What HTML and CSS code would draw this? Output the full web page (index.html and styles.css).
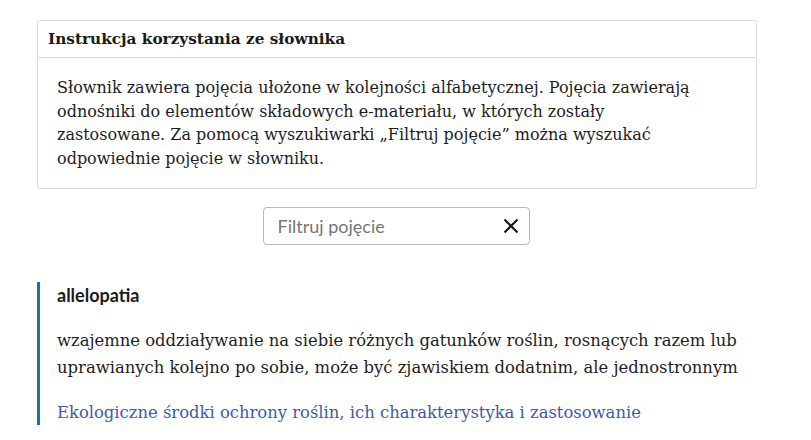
FILE: index.html
```html
<!DOCTYPE html>
<html lang="pl">
<head>
<meta charset="utf-8">
<title>Słownik</title>
<link rel="stylesheet" href="styles.css">
</head>
<body>
<main class="page">
  <section class="info">
    <h2 class="info-title">Instrukcja korzystania ze słownika</h2>
    <p class="info-text">Słownik zawiera pojęcia ułożone w kolejności alfabetycznej. Pojęcia zawierają odnośniki do elementów składowych e-materiału, w których zostały zastosowane. Za pomocą wyszukiwarki „Filtruj pojęcie” można wyszukać odpowiednie pojęcie w słowniku.</p>
  </section>
  <div class="filter-row">
    <label class="filter">
      <input class="filter-input" type="text" placeholder="Filtruj pojęcie">
      <svg class="filter-clear" viewBox="0 0 16 16" width="16" height="16" aria-hidden="true"><path d="M1.5 1.5 L14.5 14.5 M14.5 1.5 L1.5 14.5" stroke="#111" stroke-width="2" fill="none"/></svg>
    </label>
  </div>
  <article class="entry">
    <h3 class="entry-term">allelopatia</h3>
    <p class="entry-def">wzajemne oddziaływanie na siebie różnych gatunków roślin, rosnących razem lub uprawianych kolejno po sobie, może być zjawiskiem dodatnim, ale jednostronnym</p>
    <a class="entry-link" href="#">Ekologiczne środki ochrony roślin, ich charakterystyka i zastosowanie</a>
  </article>
</main>
</body>
</html>
```
FILE: styles.css
```css
* { box-sizing: border-box; }
html, body { margin: 0; padding: 0; background: #fff; }
body { font-family: "DejaVu Serif", serif; color: #1d1d1d; }
.page { padding: 20px 54px 0 37px; }
.info { border: 1px solid #dcdcdc; border-radius: 3px; }
.info-title {
  margin: 0;
  padding: 0 10px;
  height: 37px;
  display: flex;
  align-items: center;
  font-size: 15.3px;
  font-weight: bold;
  border-bottom: 1px solid #dcdcdc;
  color: #1a1a1a;
}
.info-text {
  margin: 0;
  padding: 18px 40px 18px 19px;
  font-size: 16px;
  line-height: 23.5px;
}
.filter-row { display: flex; justify-content: center; padding-top: 18px; }
.filter {
  width: 267px;
  height: 38px;
  border: 1px solid #b9b9b9;
  border-radius: 4px;
  display: flex;
  align-items: center;
  padding: 0 10px 0 14px;
  margin-right: 2px;
}
.filter-input {
  flex: 1;
  border: 0;
  outline: 0;
  font-family: Lato, sans-serif;
  font-size: 18px;
  color: #222;
  padding: 0;
  min-width: 0;
}
.filter-input::placeholder { color: #767676; }
.filter-clear { flex: none; }
.entry {
  margin-top: 37px;
  border-left: 3px solid #1e6fb0;
  padding: 1px 0 0 17px;
}
.entry-term {
  margin: 0;
  font-family: Lato, sans-serif;
  font-weight: bold;
  font-size: 18px;
  line-height: 24px;
  color: #1a1a1a;
}
.entry-def {
  margin: 20px 0 0;
  font-size: 16.4px;
  line-height: 27px;
}
.entry-link {
  display: block;
  margin-top: 20px;
  font-size: 16.4px;
  line-height: 24px;
  color: #3a5ba8;
  text-decoration: none;
}
```
